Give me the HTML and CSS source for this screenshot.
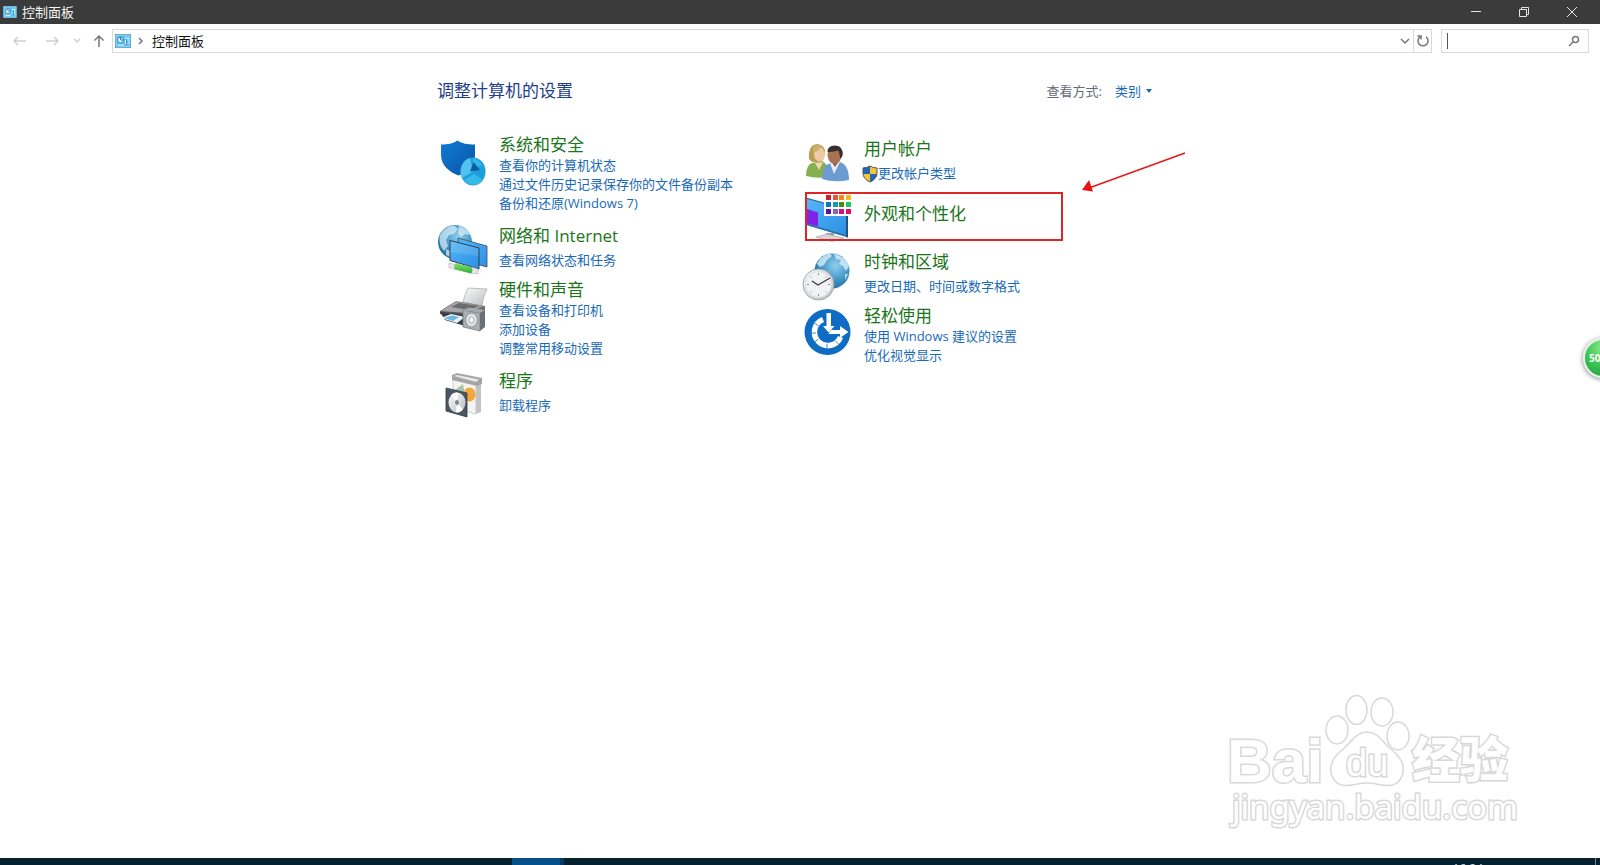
FILE: index.html
```html
<!DOCTYPE html>
<html lang="zh-CN">
<head>
<meta charset="utf-8">
<meta name="viewport" content="width=device-width, initial-scale=1">
<title>控制面板</title>
<link rel="stylesheet" href="styles.css">
</head>
<body>
<svg class="defs" aria-hidden="true">
  <defs>
    <symbol id="panel" viewBox="0 0 16 14">
      <rect x="0.5" y="0.5" width="15" height="13" fill="#5cc1ec" stroke="#2d7fa8"/>
      <rect x="1" y="1" width="14" height="12" fill="none" stroke="#a5e0f7" stroke-width="1"/>
      <circle cx="5.5" cy="6" r="3" fill="#e4f7ff" stroke="#2b86b5" stroke-width="1"/>
      <path d="M5.5 6V3M5.5 6h3" stroke="#2b86b5" stroke-width="1"/>
      <path d="M10 4h4M10.500 6v4M13 5v5M3 11h6" stroke="#e8f9ff" stroke-width="1"/>
      <path d="M11.800 5.500v5" stroke="#2b86b5" stroke-width="1"/>
    </symbol>
    <radialGradient id="globe" cx="0.6" cy="0.35" r="0.7">
      <stop offset="0" stop-color="#8fd0ee"/><stop offset="0.6" stop-color="#3f94c4"/><stop offset="1" stop-color="#1f6a9c"/>
    </radialGradient>
    <linearGradient id="screen" x1="0" y1="0" x2="1" y2="1">
      <stop offset="0" stop-color="#56b6f7"/><stop offset="1" stop-color="#2b8fe4"/>
    </linearGradient>
    <linearGradient id="silver" x1="0" y1="0" x2="1" y2="1">
      <stop offset="0" stop-color="#fbfbfb"/><stop offset="1" stop-color="#b9bdc2"/>
    </linearGradient>
    <linearGradient id="shieldBlue" x1="0" y1="0" x2="1" y2="1">
      <stop offset="0" stop-color="#0f7bd3"/><stop offset="1" stop-color="#0a55a6"/>
    </linearGradient>
    <linearGradient id="green" x1="0" y1="0" x2="0" y2="1">
      <stop offset="0" stop-color="#86e36a"/><stop offset="1" stop-color="#2fa83a"/>
    </linearGradient>
    <linearGradient id="dark" x1="0" y1="0" x2="0" y2="1">
      <stop offset="0" stop-color="#8d8d8f"/><stop offset="1" stop-color="#3e4043"/>
    </linearGradient>
  </defs>
</svg>

<header class="titlebar">
  <svg class="app-icon" aria-hidden="true"><use href="#panel"/></svg>
  <h1 class="window-title">控制面板</h1>
  <div class="window-buttons">
    <button class="window-button" aria-label="最小化"><svg width="12" height="12" viewBox="0 0 12 12"><path d="M1 5.500h10"/></svg></button>
    <button class="window-button" aria-label="还原"><svg width="12" height="12" viewBox="0 0 12 12"><path d="M1.500 3.500h7v7h-7zM3.500 3.500v-2h7v7h-2"/></svg></button>
    <button class="window-button" aria-label="关闭"><svg width="12" height="12" viewBox="0 0 12 12"><path d="M1 1l10 10M11 1L1 11"/></svg></button>
  </div>
</header>

<nav class="toolbar">
  <button class="nav-button" aria-label="后退"><svg width="14" height="12" viewBox="0 0 14 12"><path class="faint" d="M1 6h12M5 2L1 6l4 4"/></svg></button>
  <button class="nav-button" aria-label="前进"><svg width="14" height="12" viewBox="0 0 14 12"><path class="faint" d="M1 6h12M9 2l4 4-4 4"/></svg></button>
  <button class="nav-button recent" aria-label="最近位置"><svg width="8" height="6" viewBox="0 0 8 6"><path class="faint" d="M1 1l3 3 3-3"/></svg></button>
  <button class="nav-button up" aria-label="上移"><svg width="12" height="14" viewBox="0 0 12 14"><path class="strong" d="M6 13V2M1.500 6.500L6 2l4.500 4.500"/></svg></button>
  <div class="address">
    <svg class="address-icon" aria-hidden="true"><use href="#panel"/></svg>
    <svg class="crumb-arrow" width="6" height="8" viewBox="0 0 6 8" aria-hidden="true"><path class="strong" d="M1 1l3 3-3 3"/></svg>
    <a class="crumb" href="#">控制面板</a>
    <button class="address-button" aria-label="以前的位置"><svg width="10" height="7" viewBox="0 0 10 7"><path class="strong" d="M1 1l4 4 4-4"/></svg></button>
    <button class="address-button refresh" aria-label="刷新"><svg width="14" height="14" viewBox="0 0 14 14"><path class="strong" d="M10 2.800A5 5 0 1 1 4 2.800M1.500 2h3.500v3.500"/></svg></button>
  </div>
  <div class="search">
    <input class="search-input" type="text" aria-label="搜索控制面板">
    <svg width="12" height="12" viewBox="0 0 12 12" aria-hidden="true"><circle class="strong" cx="7.500" cy="4.500" r="3"/><path class="strong" d="M5.300 6.700L1 11"/></svg>
  </div>
</nav>

<main class="content">
  <div class="page">
    <div class="page-head">
      <h2 class="page-title">调整计算机的设置</h2>
      <div class="view-by"><span>查看方式:</span><button class="view-button">类别<svg width="6" height="4" viewBox="0 0 6 4" aria-hidden="true"><path d="M0 0h6L3 4z" fill="#1a6ab8"/></svg></button></div>
    </div>
    <div class="columns">
      <div class="column">
        <section class="item">
          <svg class="icon" viewBox="0 0 50 50" aria-hidden="true">
            <path d="M4 10.500C11 10.500 16 9.500 20.500 6.500C25 9.500 30 10.500 38 10.500V21C38 31 31 38 21.500 41.500C12 38 4 31 4 21z" fill="url(#shieldBlue)"/>
            <ellipse cx="36" cy="37.500" rx="12.500" ry="14" fill="#1ba0dc"/>
            <path d="M36 37.500L33 24A12.500 14 0 0 0 25 44z" fill="#50c3f0"/>
            <path d="M36 24l0 10L45 31.500A12 13 0 0 0 36 24z" fill="#30b8ec"/>
            <path d="M36.500 28L33 37.500L43 36z" fill="#0c5c9c"/>
            <path d="M27 46A12.500 14 0 0 0 46 46L37 40z" fill="#37b9e8"/>
          </svg>
          <div class="text">
            <h3><a class="category" href="#">系统和安全</a></h3>
            <a class="task" href="#">查看你的计算机状态</a>
            <a class="task" href="#">通过文件历史记录保存你的文件备份副本</a>
            <a class="task" href="#">备份和还原(Windows 7)</a>
          </div>
        </section>
        <section class="item short">
          <svg class="icon" viewBox="0 0 50 50" aria-hidden="true">
            <circle cx="18" cy="21" r="17" fill="url(#globe)"/>
            <path d="M3 14Q8 5 17 4.500L21 8L17 13L12 14L9 19L11 25L7 30Q1 23 3 14zM22 5Q30 7 33 14L28 13L24 16L21 12zM9 28L15 31L13 36L9 34z" fill="#dff1f8" opacity="0.7"/>
            <path d="M21 17L50 25V46L21 38z" fill="url(#screen)" stroke="#3c4b5c" stroke-width="0.800"/>
            <path d="M13 19.500L42 27V48L13 39.500z" fill="url(#screen)" stroke="#2f3e50" stroke-width="1"/>
            <path d="M13.500 20L41.500 27.300V35L13.500 31z" fill="#fff" opacity="0.12"/>
            <path d="M12 42l6 1.500v5l-6-2zM34 46l7 2v5l-7-1z" fill="#e7e7e7" stroke="#a9adb0" stroke-width="0.600"/>
            <path d="M19 42L34 46Q37 49 34 52.500L18 48.500Q16 45 19 42z" fill="url(#green)"/>
          </svg>
          <div class="text">
            <h3><a class="category" href="#">网络和 Internet</a></h3>
            <a class="task" href="#">查看网络状态和任务</a>
          </div>
        </section>
        <section class="item">
          <svg class="icon" viewBox="0 0 50 50" aria-hidden="true">
            <path d="M31 9L50 10Q46 17 45 27L26 23Q28 15 31 9z" fill="url(#silver)" stroke="#9b9b9b" stroke-width="0.600"/>
            <path d="M3 32L19 22L48 27V37L30 40L3 35z" fill="url(#dark)"/>
            <path d="M4 32L19 23L46 27L30 34z" fill="#a6a6a8"/>
            <path d="M14 28L22 24L42 27L32 31z" fill="#6b6c6e"/>
            <path d="M3 33L28 36V47L8 41z" fill="#3a3e44"/>
            <path d="M4 39L14 35L28 38L20 44z" fill="#e8f4fb"/>
            <path d="M7 39L15 36.500L22 38L16 42z" fill="#69b8e2"/>
            <path d="M26 31L43 34V52L26 48z" fill="#aab0b6" stroke="#70757a" stroke-width="0.700"/>
            <path d="M43 34L48 31V48L43 52z" fill="#6b7076"/>
            <path d="M26 31L32 28.500L48 31L43 34z" fill="#a5a9ad"/>
            <ellipse cx="34.500" cy="41" rx="6" ry="7" fill="#dfe2e4" stroke="#8b9094" stroke-width="1"/>
            <ellipse cx="34.500" cy="41" rx="2.500" ry="3" fill="#f7f7f7" stroke="#9ba0a4" stroke-width="0.800"/>
          </svg>
          <div class="text">
            <h3><a class="category" href="#">硬件和声音</a></h3>
            <a class="task" href="#">查看设备和打印机</a>
            <a class="task" href="#">添加设备</a>
            <a class="task" href="#">调整常用移动设置</a>
          </div>
        </section>
        <section class="item short">
          <svg class="icon" viewBox="0 0 50 50" aria-hidden="true">
            <path d="M16 13L39 18V48L16 42z" fill="#f4f3f1" stroke="#b6b6b6" stroke-width="0.600"/>
            <path d="M39 18L44 15V46L39 48z" fill="#c3c3c3"/>
            <path d="M15 9L20 7L45 12V18L40 20L15 14z" fill="#a5a5a5"/>
            <path d="M17 10L20 9L42 13.500L39 16z" fill="#e9e9e9"/>
            <path d="M18 24L26 18L28 29L18 32z" fill="#a3c6a8"/>
            <ellipse cx="32.500" cy="28.500" rx="6" ry="7" fill="#f5a63c"/>
            <path d="M9 22L30 27V51L9 45z" fill="#4a5662" stroke="#303841" stroke-width="0.800"/>
            <ellipse cx="20" cy="36.500" rx="8.500" ry="10" fill="url(#silver)"/>
            <path d="M20 36.500L14 29Q17 26 21 26.700zM20 36.500L26 43.500Q23 47 19 46.300z" fill="#fff"/>
            <ellipse cx="20" cy="36.500" rx="2.500" ry="3" fill="#7b858e" stroke="#f2f2f2" stroke-width="1"/>
          </svg>
          <div class="text">
            <h3><a class="category" href="#">程序</a></h3>
            <a class="task" href="#">卸载程序</a>
          </div>
        </section>
      </div>
      <div class="column">
        <section class="item short">
          <svg class="icon" viewBox="0 0 50 50" aria-hidden="true">
            <path d="M3 42Q3 31 9 29L19 27Q26 30 26 43Q14 45 3 42z" fill="#85b04f"/>
            <path d="M12 29L16 36L20 28z" fill="#f3d5b7"/>
            <path d="M6 25Q5 11 14 10Q23 11 22 20L19 28L9 28z" fill="#b89d55"/>
            <ellipse cx="16.500" cy="20.500" rx="5.500" ry="7" fill="#efc9a5"/>
            <path d="M10 18Q16 18 18 13Q21 16 22 19Q22 11 14 11Q8 12 10 18z" fill="#cbb26b"/>
            <path d="M19 45Q20 32 25 30L37 28Q46 31 46 46Q32 49 19 45z" fill="#6b9bd2"/>
            <path d="M27 29L31 40L37 28z" fill="#e8eff6"/>
            <path d="M28 27L32 33L37 26z" fill="#8d5c3c"/>
            <ellipse cx="31.500" cy="21" rx="7" ry="9" fill="#a87250"/>
            <path d="M24.500 18Q24 12 32 11.500Q41 12 39.500 22L37 25Q37 19 35 16.500Q30 18 24.500 18z" fill="#35302d"/>
          </svg>
          <div class="text">
            <h3><a class="category" href="#">用户帐户</a></h3>
            <a class="task shielded" href="#"><svg class="uac" viewBox="0 0 16 18" aria-hidden="true">
              <path d="M1 3Q5 3 8 1Q11 3 15 3V8Q15 14 8 17Q1 14 1 8z" fill="#f8c23c"/>
              <path d="M1 3Q5 3 8 1V9H1zM8 9h7Q14 14 8 17z" fill="#1f68b5"/>
              <path d="M1 3Q5 3 8 1Q11 3 15 3V8Q15 14 8 17Q1 14 1 8z" fill="none" stroke="#4a5560" stroke-width="1"/>
            </svg>更改帐户类型</a>
          </div>
        </section>
        <section class="item single">
          <svg class="icon" viewBox="0 0 50 50" aria-hidden="true">
            <path d="M23 41h8v5h-8z" fill="#9ea3a8"/>
            <path d="M13 45L24 42L41 46L29 49.500z" fill="#d4d7da" stroke="#9a9ea2" stroke-width="0.600"/>
            <path d="M3 5.500L45 17V45.500L3 33z" fill="#2d6fa8"/>
            <path d="M4 7L43 18V43L4 31.500z" fill="url(#screen)"/>
            <path d="M4 17L15 20.500V34.500L4 31.500z" fill="#8122e8"/>
            <path d="M43 17.500L45 17V45.500L43 45z" fill="#20527c"/>
            <rect x="21" y="2" width="29" height="22" fill="#fff"/>
            <path d="M23 3h5v5h-5z" fill="#c8202c"/><path d="M30 3h5v5h-5z" fill="#ec5146"/><path d="M36 3h5v5h-5z" fill="#f58a12"/><path d="M43 3h5v5h-5z" fill="#f8bb16"/>
            <path d="M23 10h5v5h-5z" fill="#1073bf"/><path d="M30 10h5v5h-5z" fill="#1598b8"/><path d="M36 10h5v5h-5z" fill="#4b8a12"/><path d="M43 10h5v5h-5z" fill="#1fc368"/>
            <path d="M23 17h5v5h-5z" fill="#5611a6"/><path d="M30 17h5v5h-5z" fill="#8a66b5"/><path d="M36 17h5v5h-5z" fill="#cf0f8d"/><path d="M43 17h5v5h-5z" fill="#df0c64"/>
          </svg>
          <div class="text">
            <h3><a class="category" href="#">外观和个性化</a></h3>
          </div>
          <span class="highlight"></span>
          <svg class="pointer" width="106" height="42" viewBox="0 0 106 42" aria-hidden="true"><path d="M104 1L8 36" stroke="#e01b1b" stroke-width="1.600"/><path d="M1 38L8 28L12 39.500z" fill="#ee1111"/></svg>
        </section>
        <section class="item short">
          <svg class="icon" viewBox="0 0 50 50" aria-hidden="true">
            <circle cx="29" cy="24" r="17.500" fill="url(#globe)"/>
            <path d="M14 17Q18 8 27 6.500L29 9L24 13L21 18L17 20zM31 7Q42 9 46 19L43 24L40 19L36 17L38 13L33 12zM42 27l3 0l-3 6z" fill="#e3f3fa" opacity="0.75"/>
            <circle cx="15.500" cy="37.500" r="15.500" fill="url(#silver)" stroke="#a1a5a9" stroke-width="1"/>
            <circle cx="15.500" cy="37.500" r="13" fill="#f1f2f3" stroke="#d0d3d5" stroke-width="0.600"/>
            <path d="M15.500 26v2M15.500 47v2M4 37.500h2M25 37.500h2M7.500 29.500l1 1M23.500 29.500l-1 1M7.500 45.500l1-1M23.500 45.500l-1-1" stroke="#8d9195" stroke-width="1"/>
            <path d="M9 34L15 38L27 31" fill="none" stroke="#3b3b3b" stroke-width="1.300"/>
          </svg>
          <div class="text">
            <h3><a class="category" href="#">时钟和区域</a></h3>
            <a class="task" href="#">更改日期、时间或数字格式</a>
          </div>
        </section>
        <section class="item">
          <svg class="icon" viewBox="0 0 50 50" aria-hidden="true">
            <circle cx="24.500" cy="27" r="23" fill="#0f6cc4"/>
            <path d="M20 14.500A13.500 13.500 0 1 0 37.500 32" fill="none" stroke="#fff" stroke-width="5.500"/>
            <path d="M15.500 21L10 17M13 28H6M15.500 34l-5 4M24 38.500v6M32.500 36l4 4" stroke="#0f6cc4" stroke-width="0.800"/>
            <path d="M23.500 8h4.500v13h3.500L25.700 27.500L20 21h3.500z" fill="#fff"/>
            <path d="M28 25h9v-4l8.500 6L37 33v-4H25.500z" fill="#fff"/>
          </svg>
          <div class="text">
            <h3><a class="category" href="#">轻松使用</a></h3>
            <a class="task" href="#">使用 Windows 建议的设置</a>
            <a class="task" href="#">优化视觉显示</a>
          </div>
        </section>
      </div>
    </div>
  </div>

  <svg class="watermark" width="300" height="148" viewBox="0 0 300 148" role="img" aria-label="Baidu 经验">
    <g class="mark">
      <ellipse cx="117" cy="37" rx="11" ry="14"/>
      <ellipse cx="136.500" cy="17" rx="10.500" ry="14.500"/>
      <ellipse cx="162" cy="19" rx="11" ry="14"/>
      <ellipse cx="178" cy="43" rx="11" ry="14"/>
      <path d="M147 39C158 39 163 50 173 58C183 66 187 78 179 88C170 97 160 90 147 90C134 90 124 97 115 88C107 78 111 66 121 58C131 50 136 39 147 39z"/>
      <text class="mark-bai" x="7" y="89">Bai</text>
      <text class="mark-du" x="126" y="83">du</text>
      <text class="mark-cn" x="192" y="84">经验</text>
      <text class="mark-url" x="12" y="126">jingyan.baidu.com</text>
    </g>
  </svg>
</main>

<button class="float-ball" aria-label="加速球 50"><span>50</span></button>

<footer class="taskbar">
  <span class="running"></span>
  <span class="clock">16:24</span>
</footer>
</body>
</html>
```

FILE: styles.css
```css
* {
  box-sizing: border-box;
}

body {
  margin: 0;
  min-height: 100vh;
  display: flex;
  flex-direction: column;
  position: relative;
  overflow-x: hidden;
  background: #fff;
  color: #111;
  font: 13px/19px "Open Sans", "Noto Sans CJK SC", sans-serif;
}

h1, h2, h3 {
  margin: 0;
  font-weight: 400;
}

a {
  text-decoration: none;
}

button {
  border: 0;
  padding: 0;
  background: none;
  font: inherit;
  display: flex;
  align-items: center;
  justify-content: center;
}

.defs {
  position: absolute;
  width: 0;
  height: 0;
}

.titlebar {
  display: flex;
  align-items: center;
  height: 24px;
  padding: 0 4px 0 3px;
  background: #3b3b3b;
  color: #f4f4f4;
}

.app-icon {
  width: 14px;
  height: 12px;
  margin-right: 5px;
}

.window-title {
  font-size: 13px;
  line-height: 22px;
}

.window-buttons {
  display: flex;
  margin-left: auto;
}

.window-button {
  width: 48px;
  height: 22px;
}

.window-button path {
  fill: none;
  stroke: #e6e6e6;
}

.toolbar {
  display: flex;
  align-items: center;
  padding: 5px 11px 7px 4px;
}

.nav-button {
  width: 32px;
  height: 24px;
}

.nav-button.recent {
  width: 18px;
}

.nav-button.up {
  width: 26px;
}

.faint,
.strong {
  fill: none;
  stroke: #cfcfcf;
  stroke-width: 1.5;
}

.strong {
  stroke: #777;
}

.address {
  flex: 1;
  display: flex;
  align-items: center;
  height: 24px;
  border: 1px solid #d9d9d9;
  padding-left: 2px;
}

.address-icon {
  width: 16px;
  height: 14px;
}

.crumb-arrow {
  margin: 0 8px 0 7px;
}

.crumb {
  color: #111;
}

.address-button {
  width: 16px;
  height: 22px;
}

.crumb + .address-button {
  margin-left: auto;
}

.address-button.refresh {
  width: 18px;
  border-left: 1px solid #d9d9d9;
}

.search {
  display: flex;
  align-items: center;
  width: 148px;
  height: 24px;
  margin-left: 9px;
  padding: 0 8px 0 5px;
  border: 1px solid #d9d9d9;
}

.search-input {
  flex: 1;
  min-width: 0;
  height: 16px;
  padding: 0;
  border: 0;
  border-left: 1px solid #555;
  outline: 0;
  font: inherit;
}

.content {
  flex: 1;
  position: relative;
  padding: 19px 24px;
}

.page {
  max-width: 726px;
  margin: 0 auto;
}

.page-head {
  display: flex;
  align-items: center;
  justify-content: space-between;
  padding-right: 11px;
  margin-bottom: 31px;
}

.page-title {
  font-size: 17px;
  line-height: 24px;
  color: #1d3e8c;
}

.view-by {
  display: flex;
  gap: 13px;
  color: #666b78;
}

.view-button {
  gap: 5px;
  color: #1a6ab8;
}

.columns {
  display: grid;
  grid-template-columns: 1fr 1fr;
  gap: 6px;
}

.column {
  display: flex;
  flex-direction: column;
  gap: 8px;
}

.item {
  display: flex;
  gap: 12px;
  position: relative;
}

.column + .column .item {
  gap: 11px;
}

.icon {
  flex: none;
  width: 50px;
  height: 50px;
  overflow: visible;
}

.text {
  display: flex;
  flex-direction: column;
  align-items: flex-start;
  white-space: nowrap;
}

.short .text {
  gap: 4px;
  padding-top: 4px;
}

.single {
  height: 47px;
}

.single .text {
  padding-top: 11px;
}

.category {
  display: block;
  font-size: 17px;
  line-height: 22px;
  color: #1a741a;
}

.task {
  color: #1a6ab8;
}

.shielded {
  display: flex;
  align-items: center;
  margin-left: -2px;
}

.uac {
  width: 16px;
  height: 18px;
}

.highlight {
  position: absolute;
  left: 2px;
  top: 0;
  width: 258px;
  height: 49px;
  border: 2px solid #dc2626;
}

.pointer {
  position: absolute;
  left: 278px;
  top: -40px;
}

.watermark {
  position: absolute;
  right: 80px;
  bottom: 17px;
}

.mark {
  fill: #fff;
  stroke: #d8d8d8;
  stroke-width: 1.5;
}

.mark text {
  paint-order: stroke;
  stroke-width: 3;
}

.mark-bai {
  font: 700 62px "Liberation Sans", sans-serif;
}

.mark .mark-du {
  font: 400 38px "Liberation Sans", sans-serif;
}

.mark-cn {
  font: 900 48px "Noto Sans CJK SC", sans-serif;
}

.mark-url {
  font: 400 33px "Noto Sans", sans-serif;
}

.float-ball {
  position: absolute;
  right: -23px;
  top: 338px;
  width: 40px;
  height: 40px;
  border: 2px solid #e4f0e6;
  border-radius: 50%;
  background: radial-gradient(circle at 50% 20%, #8ceb8e, #3cc653 50%, #20a03c);
  box-shadow: 0 1px 5px rgba(0, 0, 0, 0.5);
  color: #fff;
  font: 700 10px "Open Sans", sans-serif;
  justify-content: flex-start;
  padding-left: 4px;
}

.taskbar {
  display: flex;
  height: 7px;
  overflow: hidden;
  padding-right: 4px;
  background: #05202f;
  color: #c8d4dc;
}

.running {
  width: 52px;
  margin-left: 32vw;
  background: #07508a;
  border-right: 4px solid #063a62;
}

.clock {
  margin-left: auto;
  padding: 1px 112px 0 0;
  border-right: 1px solid #6f828d;
  font-size: 12px;
}
```
